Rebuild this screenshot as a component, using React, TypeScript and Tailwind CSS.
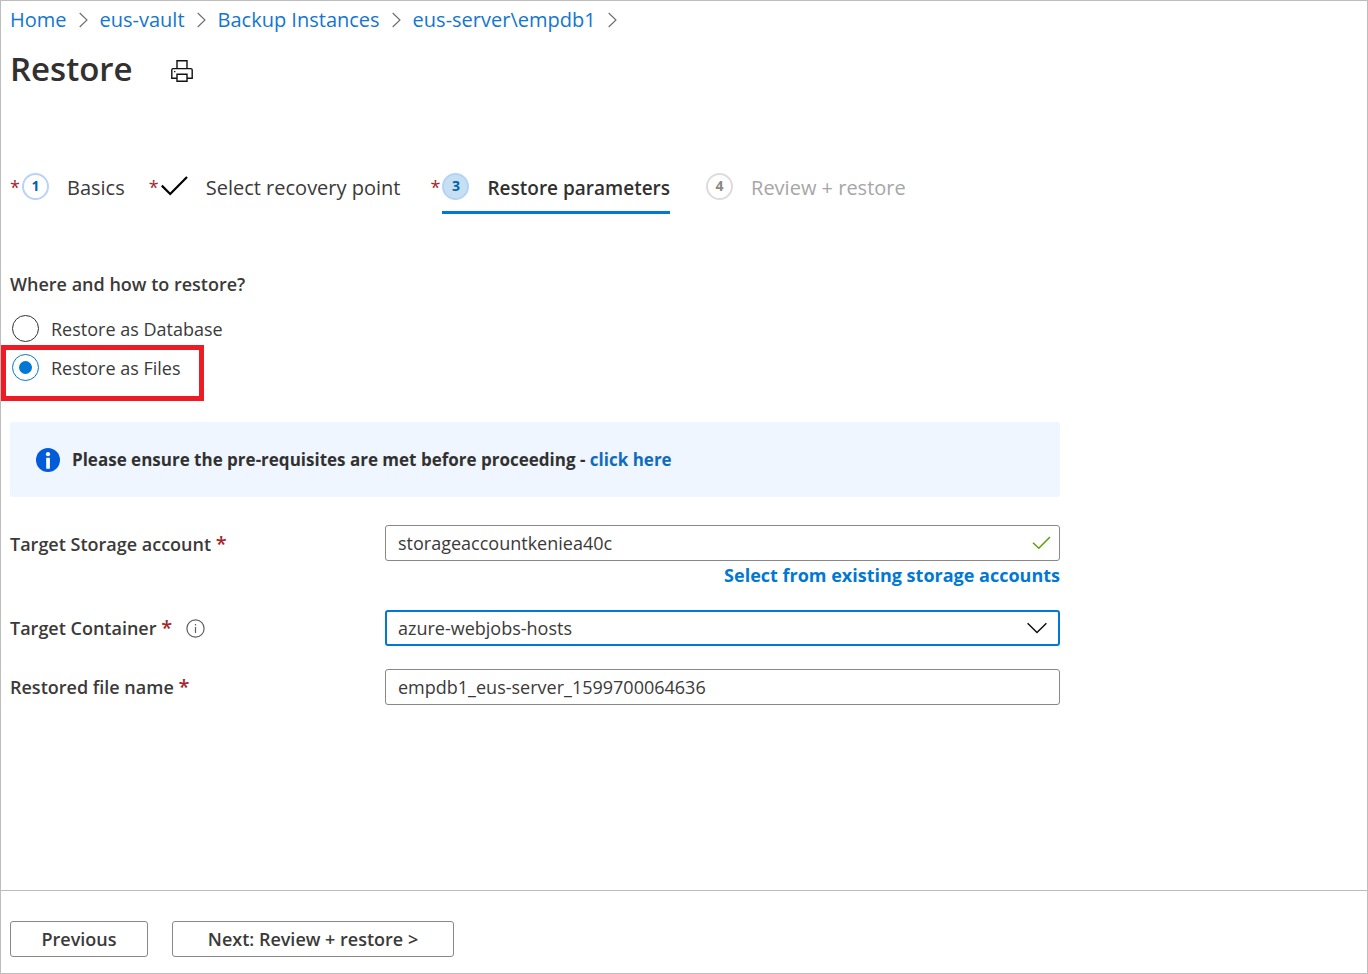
import { useState } from "react";
import type { ReactNode } from "react";

const crumbs = ["Home", "eus-vault", "Backup Instances", "eus-server\\empdb1"];

function Separator() {
  return (
    <svg className="h-4 w-[9px]" viewBox="0 0 9 16" fill="none" stroke="#6b6b6b" strokeWidth="1.1" aria-hidden="true">
      <path d="M0.7 1 L8 8 L0.7 15" />
    </svg>
  );
}

function PrintIcon() {
  return (
    <svg className="h-[22px] w-[22px]" viewBox="0 0 22 22" fill="none" stroke="#111" strokeWidth="1.4" aria-hidden="true">
      <path d="M6 8.5 V0.8 H16 V8.5" />
      <path d="M6 18.3 H0.8 V10 Q0.8 8.6 2.2 8.6 H19.8 Q21.2 8.6 21.2 10 V18.3 H16" />
      <path d="M6 14.2 H16 V21.2 H6 Z" />
      <path d="M3 11.6 H4.4" strokeWidth="1.2" />
    </svg>
  );
}

function Required() {
  return <span className="text-xl leading-none font-semibold text-[#a4262c]">*</span>;
}

function StepNumber({ value, tone }: { value: number; tone: "done" | "current" | "pending" }) {
  const tones = {
    done: "border-[#b8d2fb] bg-white text-[#0062ad]",
    current: "border-[#b3d3fa] bg-[#c7e0f1] text-[#0062ad]",
    pending: "border-[#dcdcdc] bg-white text-[#8a8886]",
  };
  return (
    <span className={`flex h-[27px] w-[27px] items-center justify-center rounded-full border-2 text-sm font-bold ${tones[tone]}`}>
      {value}
    </span>
  );
}

function Step({ marker, label, required, current, disabled }: { marker: ReactNode; label: string; required?: boolean; current?: boolean; disabled?: boolean }) {
  return (
    <div className="flex">
      {required && <span className="w-3 pt-[14px] text-lg leading-7 text-[#a4262c]">*</span>}
      <button
        type="button"
        role="tab"
        aria-selected={!!current}
        disabled={disabled}
        className={`flex h-[55px] items-center gap-[18px] border-b-3 pt-[2px] leading-7 whitespace-nowrap ${
          current ? "border-[#0078d4] text-[19px] font-semibold text-[#323130]" : "border-transparent text-xl"
        } ${disabled ? "text-[#a6a6a6]" : ""}`}
      >
        {marker}
        <span className="pt-[3px]">{label}</span>
      </button>
    </div>
  );
}

function Radio({ label, checked, onSelect }: { label: string; checked: boolean; onSelect: () => void }) {
  return (
    <label className="flex h-[39px] w-fit items-center gap-3 pl-[2px]">
      <input
        type="radio"
        name="restore-mode"
        checked={checked}
        onChange={onSelect}
        className="flex h-[27px] w-[27px] appearance-none items-center justify-center rounded-full border border-[#323130] bg-white checked:border-[#0078d4] checked:before:h-[13px] checked:before:w-[13px] checked:before:rounded-full checked:before:bg-[#0078d4]"
      />
      {label}
    </label>
  );
}

const field = "h-9 w-full rounded-[3px] border border-[#8a8886] bg-white px-3 outline-none";

export default function App() {
  const [mode, setMode] = useState("files");
  return (
    <div className="flex min-h-screen flex-col border border-[#bdbdbd] bg-white font-['Open_Sans','Noto_Sans',sans-serif] text-lg leading-7 text-[#3b3a39]">
      <main className="flex-1 px-[9px]">
        <nav aria-label="Breadcrumb" className="flex h-[38px] items-center gap-3 text-xl text-[#1276d2]">
          {crumbs.map((c) => (
            <span key={c} className="flex items-center gap-3">
              <a href="#">{c}</a>
              <Separator />
            </span>
          ))}
        </nav>
        <header className="flex h-[60px] items-center gap-[38px]">
          <h1 className="text-[33px] leading-[48px] font-semibold text-[#323130]">Restore</h1>
          <button type="button" aria-label="Print" className="pt-1">
            <PrintIcon />
          </button>
        </header>

        <div role="tablist" className="mt-[60px] flex">
          <Step required marker={<StepNumber value={1} tone="done" />} label="Basics" />
          <div className="w-6" />
          <Step
            required
            marker={
              <svg className="h-5 w-[27px]" viewBox="0 0 27 20" fill="none" stroke="#000" strokeWidth="2.2" aria-hidden="true">
                <path d="M0.8 9.6 L9.2 18 L26 1" />
              </svg>
            }
            label="Select recovery point"
          />
          <div className="w-[30px]" />
          <Step required current marker={<StepNumber value={3} tone="current" />} label="Restore parameters" />
          <div className="w-9" />
          <Step disabled marker={<StepNumber value={4} tone="pending" />} label="Review + restore" />
        </div>

        <fieldset className="mt-14">
          <legend className="font-semibold">Where and how to restore?</legend>
          <div className="pt-[11px]">
            <Radio label="Restore as Database" checked={mode === "database"} onSelect={() => setMode("database")} />
            <div className="relative">
              <Radio label="Restore as Files" checked={mode === "files"} onSelect={() => setMode("files")} />
              <div className="pointer-events-none absolute top-[-3px] left-[-9px] h-14 w-[203px] border-[5px] border-[#ed1c24]" />
            </div>
          </div>
        </fieldset>

        <div className="mt-[35px] flex h-[75px] max-w-[1050px] items-center gap-3 rounded-[3px] bg-[#eff6ff] pl-[26px] text-[17px] font-bold text-[#323130]">
          <svg className="h-6 w-6" viewBox="0 0 24 24" aria-hidden="true">
            <circle cx="12" cy="12" r="12" fill="#015cda" />
            <circle cx="12" cy="6.2" r="2.1" fill="#fff" />
            <rect x="10.2" y="9.8" width="3.7" height="11" rx="0.5" fill="#fff" />
          </svg>
          <p>
            Please ensure the pre-requisites are met before proceeding -{" "}
            <a href="#" className="text-[#0f6cbd]">click here</a>
          </p>
        </div>

        <form className="mt-7 grid max-w-[1050px] grid-cols-[375px_1fr]">
          <label htmlFor="account" className="pt-[5px] font-semibold">
            Target Storage account <Required />
          </label>
          <div className="flex flex-col">
            <div className="relative">
              <input id="account" defaultValue="storageaccountkeniea40c" className={field} />
              <svg className="absolute top-[11px] right-[9px] h-[14px] w-[19px]" viewBox="0 0 19 14" fill="none" stroke="#57a300" strokeWidth="1.5" aria-hidden="true">
                <path d="M1 6.8 L6.8 12.3 L18 1" />
              </svg>
            </div>
            <a href="#" className="self-end font-bold text-[#0078d4]">Select from existing storage accounts</a>
          </div>

          <div className="mt-[21px] flex items-center gap-[14px]">
            <label htmlFor="container" className="font-semibold">
              Target Container <Required />
            </label>
            <svg className="h-[19px] w-[19px]" viewBox="0 0 19 19" fill="none" stroke="#605e5c" aria-hidden="true">
              <circle cx="9.5" cy="9.5" r="8.6" strokeWidth="1.2" />
              <path d="M9.5 8 V14 M9.5 5 V6.5" strokeWidth="1.2" />
            </svg>
          </div>
          <div className="relative mt-[21px]">
            <select id="container" className="h-9 w-full appearance-none rounded-[3px] border-2 border-[#0078d4] bg-white px-[11px] outline-none">
              <option>azure-webjobs-hosts</option>
            </select>
            <svg className="pointer-events-none absolute top-3 right-[13px] h-3 w-5" viewBox="0 0 20 12" fill="none" stroke="#111" strokeWidth="1.5" aria-hidden="true">
              <path d="M0.6 1.2 L10 10.5 L19.4 1.2" />
            </svg>
          </div>

          <label htmlFor="filename" className="mt-[23px] pt-[4px] font-semibold">
            Restored file name <Required />
          </label>
          <input id="filename" defaultValue="empdb1_eus-server_1599700064636" className={`mt-[23px] ${field}`} />
        </form>
      </main>

      <footer className="flex gap-6 border-t border-[#bdbdbd] px-[9px] pt-[30px] pb-4 font-semibold">
        <button type="button" className="h-9 min-w-[138px] rounded-[3px] border border-[#8a8886] px-[30px] leading-none">Previous</button>
        <button type="button" className="h-9 min-w-[282px] rounded-[3px] border border-[#8a8886] px-[30px] leading-none">Next: Review + restore &gt;</button>
      </footer>
    </div>
  );
}
